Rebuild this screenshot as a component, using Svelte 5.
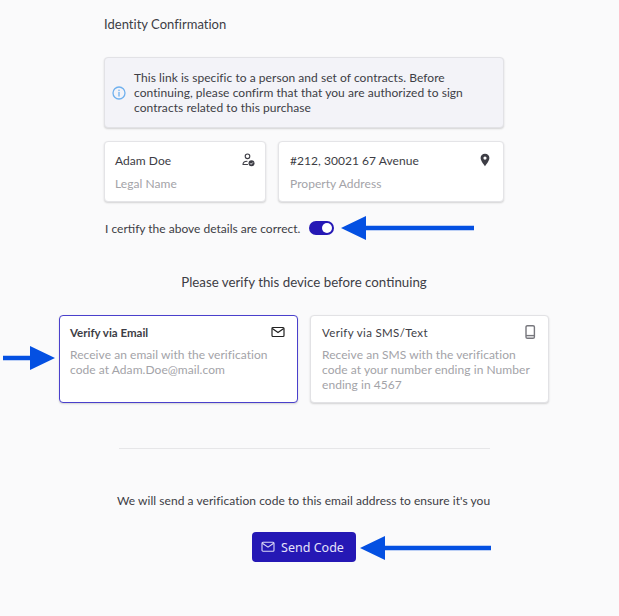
<script>
  const stroke = '#3d3d45';
</script>

<main class="page">
  <section class="narrow">
    <h1>Identity Confirmation</h1>
    <div class="notice">
      <svg class="info" viewBox="0 0 14 14" width="14" height="14" fill="none" stroke="#6fb0ee" stroke-width="1.3">
        <circle cx="7" cy="7" r="6" />
        <path d="M7 6.4v3.6" stroke-linecap="round" />
        <circle cx="7" cy="4.2" r=".8" fill="#6fb0ee" stroke="none" />
      </svg>
      <p>This link is specific to a person and set of contracts. Before continuing, please confirm that that you are authorized to sign contracts related to this purchase</p>
    </div>
    <div class="fields">
      <div class="field name">
        <div class="top">
          <span>Adam Doe</span>
          <svg viewBox="0 0 14 14" width="14" height="14" fill="none" stroke={stroke} stroke-width="1.1">
            <circle cx="6.5" cy="3.3" r="2.3" />
            <path d="M2 11.5c0-2.4 1.6-3.3 4-3.3M2 11.5h4.5" stroke-linecap="round" />
            <circle cx="10.5" cy="10.3" r="3" fill={stroke} stroke="none" />
            <path d="M9.1 10.3l1 1 1.7-1.8" stroke="#fff" stroke-width=".9" />
          </svg>
        </div>
        <div class="label">Legal Name</div>
      </div>
      <div class="field address">
        <div class="top">
          <span>#212, 30021 67 Avenue</span>
          <svg viewBox="0 0 14 14" width="14" height="14" fill={stroke}>
            <path fill-rule="evenodd" d="M7 .8C4.4.8 2.6 2.7 2.6 5.1 2.6 8.2 7 13.2 7 13.2s4.4-5 4.4-8.1C11.4 2.7 9.6.8 7 .8zm0 5.9a1.6 1.6 0 1 1 0-3.2 1.6 1.6 0 0 1 0 3.2z" />
          </svg>
        </div>
        <div class="label">Property Address</div>
      </div>
    </div>
    <div class="certify">
      <span>I certify the above details are correct.</span>
      <span class="toggle"><span class="knob"></span></span>
    </div>
  </section>

  <h2>Please verify this device before continuing</h2>

  <section class="options">
    <div class="option active">
      <div class="option-head">
        <strong>Verify via Email</strong>
        <svg viewBox="0 0 14 14" width="14" height="14" fill="none" stroke="#222" stroke-width="1.2">
          <rect x="1" y="2.5" width="12" height="9" rx="1" />
          <path d="M1.3 3.4L7 7.4l5.7-4" />
        </svg>
      </div>
      <p>Receive an email with the verification code at Adam.Doe@mail.com</p>
    </div>
    <div class="option">
      <div class="option-head">
        <span>Verify via SMS/Text</span>
        <svg viewBox="0 0 14 14" width="14" height="14" fill="none" stroke="#77777d" stroke-width="1.4">
          <rect x="3" y=".7" width="8.4" height="12.6" rx="1.4" />
          <path d="M3 10.6h8.4" />
        </svg>
      </div>
      <p>Receive an SMS with the verification code at your number ending in Number ending in 4567</p>
    </div>
  </section>

  <hr />

  <p class="hint">We will send a verification code to this email address to ensure it's you</p>

  <div class="actions">
    <button type="button">
      <svg viewBox="0 0 14 14" width="14" height="14" fill="none" stroke="#dcd9f6" stroke-width="1.1">
        <rect x="1" y="2.2" width="12" height="9" rx="1" />
        <path d="M1.3 3.2L7 7.2l5.7-4" />
      </svg>
      <span>Send Code</span>
    </button>
  </div>

  <svg class="arrow a1" viewBox="0 0 134 24" width="134" height="24"><path d="M0 12L25 0v9.8h108v4.4H25V24z" /></svg>
  <svg class="arrow a2" viewBox="0 0 52 24" width="52" height="24"><path d="M52 12L27 0v9.8H0v4.4h27V24z" /></svg>
  <svg class="arrow a3" viewBox="0 0 131 24" width="131" height="24"><path d="M0 12L25 0v9.8h106v4.4H25V24z" /></svg>
</main>

<style>
  :global(body) {
    margin: 0;
    background: #fafafb;
  }
  .page {
    position: relative;
    width: 619px;
    height: 616px;
    overflow: hidden;
    box-sizing: border-box;
    padding-top: 16px;
    display: flex;
    flex-direction: column;
    align-items: flex-start;
    font-family: "Lato", "Noto Sans", sans-serif;
    color: #3d3d45;
    font-size: 12px;
    letter-spacing: .05px;
  }
  .narrow {
    width: 400px;
    margin-left: 104px;
  }
  h1 {
    margin: 0;
    font-size: 13px;
    font-weight: 400;
    line-height: 16px;
    letter-spacing: .02px;
  }
  .notice {
    margin-top: 25px;
    height: 71px;
    box-sizing: border-box;
    display: flex;
    align-items: center;
    gap: 7px;
    padding: 0 16px 0 7px;
    background: #f3f3f8;
    border: 1px solid #e2e2e6;
    border-radius: 4px;
    box-shadow: 0 1px 2px rgba(0, 0, 0, .16);
  }
  .info { flex: none; }
  .notice p {
    margin: 0 0 0 1px;
    line-height: 15px;
  }
  .fields {
    display: flex;
    gap: 12px;
    margin-top: 13px;
  }
  .field {
    height: 61px;
    box-sizing: border-box;
    padding: 11px 10px 0;
    background: #fff;
    border: 1px solid #e4e4e7;
    border-radius: 4px;
    box-shadow: 0 1px 2px rgba(0, 0, 0, .16);
  }
  .address { padding: 11px 11px 0; }
  .name { width: 162px; }
  .address { width: 226px; }
  .top {
    display: flex;
    justify-content: space-between;
    height: 16px;
    line-height: 16px;
  }
  .label {
    margin-top: 7px;
    line-height: 16px;
    color: #a3a3a8;
  }
  .certify {
    display: flex;
    align-items: center;
    gap: 9px;
    margin: 18px 0 0 1px;
    height: 16px;
    letter-spacing: 0;
  }
  .toggle {
    display: block;
    position: relative;
    width: 25px;
    height: 14px;
    border-radius: 7px;
    background: #2518b5;
  }
  .knob {
    position: absolute;
    top: 2px;
    right: 2px;
    width: 10px;
    height: 10px;
    border-radius: 50%;
    background: #fff;
  }
  h2 {
    align-self: flex-start;
    width: 608px;
    margin: 37px 0 0;
    text-align: center;
    font-size: 13.3px;
    font-weight: 400;
    line-height: 18px;
    letter-spacing: 0;
  }
  .options {
    display: flex;
    gap: 12px;
    margin: 24px 0 0 59px;
  }
  .option {
    width: 239px;
    height: 88px;
    box-sizing: border-box;
    padding: 8px 11px 0 11px;
    background: #fff;
    border: 1px solid #e2e2e5;
    border-radius: 4px;
    box-shadow: 0 1px 2px rgba(0, 0, 0, .16);
  }
  .option.active {
    border-color: #4a40cc;
    padding: 8px 12px 0 10px;
  }
  .option-head {
    display: flex;
    justify-content: space-between;
    align-items: center;
    height: 16px;
    font-size: 11.5px;
    letter-spacing: .35px;
  }
  .option-head strong {
    font-weight: 700;
    letter-spacing: 0;
  }
  .option p {
    margin: 7px 0 0;
    line-height: 15px;
    color: #a3a3a8;
  }
  hr {
    width: 371px;
    margin: 45px 0 0 119px;
    border: 0;
    border-top: 1px solid #e6e6e8;
  }
  .hint {
    margin: 44px 0 0 117px;
    line-height: 16px;
    white-space: nowrap;
  }
  .actions {
    margin: 23px 0 0 252px;
  }
  button {
    width: 104px;
    height: 30px;
    display: flex;
    align-items: center;
    justify-content: center;
    gap: 6px;
    border: 0;
    border-radius: 4px;
    padding: 0 3px 0 0;
    background: #2518b5;
    color: #e6e3fa;
    font-family: "Noto Sans", sans-serif;
    font-size: 12.5px;
  }
  .arrow {
    position: absolute;
    fill: #0450e2;
  }
  .a1 { left: 341px; top: 216px; }
  .a2 { left: 3px; top: 346px; }
  .a3 { left: 360px; top: 536px; }
</style>
